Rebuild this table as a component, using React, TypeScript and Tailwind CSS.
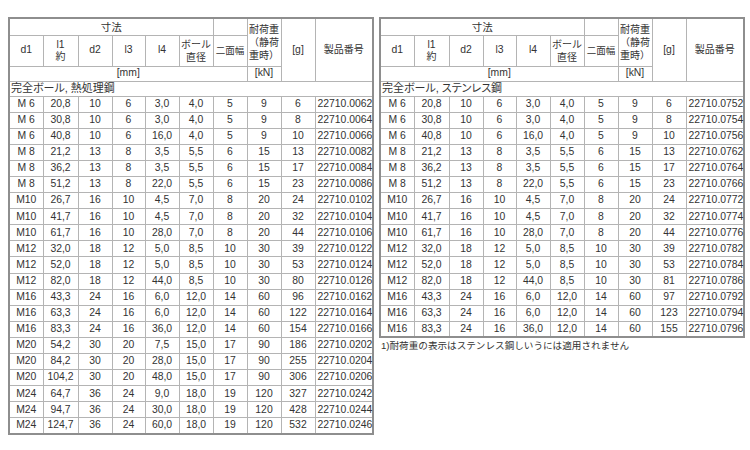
import React from "react";

type Row = [string, string, string, string, string, string, string, string, string, string];

const leftRows: Row[] = [
  ["M 6", "20,8", "10", "6", "3,0", "4,0", "5", "9", "6", "22710.0062"],
  ["M 6", "30,8", "10", "6", "3,0", "4,0", "5", "9", "8", "22710.0064"],
  ["M 6", "40,8", "10", "6", "16,0", "4,0", "5", "9", "10", "22710.0066"],
  ["M 8", "21,2", "13", "8", "3,5", "5,5", "6", "15", "13", "22710.0082"],
  ["M 8", "36,2", "13", "8", "3,5", "5,5", "6", "15", "17", "22710.0084"],
  ["M 8", "51,2", "13", "8", "22,0", "5,5", "6", "15", "23", "22710.0086"],
  ["M10", "26,7", "16", "10", "4,5", "7,0", "8", "20", "24", "22710.0102"],
  ["M10", "41,7", "16", "10", "4,5", "7,0", "8", "20", "32", "22710.0104"],
  ["M10", "61,7", "16", "10", "28,0", "7,0", "8", "20", "44", "22710.0106"],
  ["M12", "32,0", "18", "12", "5,0", "8,5", "10", "30", "39", "22710.0122"],
  ["M12", "52,0", "18", "12", "5,0", "8,5", "10", "30", "53", "22710.0124"],
  ["M12", "82,0", "18", "12", "44,0", "8,5", "10", "30", "80", "22710.0126"],
  ["M16", "43,3", "24", "16", "6,0", "12,0", "14", "60", "96", "22710.0162"],
  ["M16", "63,3", "24", "16", "6,0", "12,0", "14", "60", "122", "22710.0164"],
  ["M16", "83,3", "24", "16", "36,0", "12,0", "14", "60", "154", "22710.0166"],
  ["M20", "54,2", "30", "20", "7,5", "15,0", "17", "90", "186", "22710.0202"],
  ["M20", "84,2", "30", "20", "28,0", "15,0", "17", "90", "255", "22710.0204"],
  ["M20", "104,2", "30", "20", "48,0", "15,0", "17", "90", "306", "22710.0206"],
  ["M24", "64,7", "36", "24", "9,0", "18,0", "19", "120", "327", "22710.0242"],
  ["M24", "94,7", "36", "24", "30,0", "18,0", "19", "120", "428", "22710.0244"],
  ["M24", "124,7", "36", "24", "60,0", "18,0", "19", "120", "532", "22710.0246"],
];

const rightRows: Row[] = [
  ["M 6", "20,8", "10", "6", "3,0", "4,0", "5", "9", "6", "22710.0752"],
  ["M 6", "30,8", "10", "6", "3,0", "4,0", "5", "9", "8", "22710.0754"],
  ["M 6", "40,8", "10", "6", "16,0", "4,0", "5", "9", "10", "22710.0756"],
  ["M 8", "21,2", "13", "8", "3,5", "5,5", "6", "15", "13", "22710.0762"],
  ["M 8", "36,2", "13", "8", "3,5", "5,5", "6", "15", "17", "22710.0764"],
  ["M 8", "51,2", "13", "8", "22,0", "5,5", "6", "15", "23", "22710.0766"],
  ["M10", "26,7", "16", "10", "4,5", "7,0", "8", "20", "24", "22710.0772"],
  ["M10", "41,7", "16", "10", "4,5", "7,0", "8", "20", "32", "22710.0774"],
  ["M10", "61,7", "16", "10", "28,0", "7,0", "8", "20", "44", "22710.0776"],
  ["M12", "32,0", "18", "12", "5,0", "8,5", "10", "30", "39", "22710.0782"],
  ["M12", "52,0", "18", "12", "5,0", "8,5", "10", "30", "53", "22710.0784"],
  ["M12", "82,0", "18", "12", "44,0", "8,5", "10", "30", "81", "22710.0786"],
  ["M16", "43,3", "24", "16", "6,0", "12,0", "14", "60", "97", "22710.0792"],
  ["M16", "63,3", "24", "16", "6,0", "12,0", "14", "60", "123", "22710.0794"],
  ["M16", "83,3", "24", "16", "36,0", "12,0", "14", "60", "155", "22710.0796"],
];

const colWidths = ["w-[34px]", "w-[35px]", "w-[34px]", "w-[33px]", "w-[34px]", "w-[34px]", "w-[34px]", "w-[34px]", "w-[34px]", "w-[58px]"];

const cell = "border border-[#b4b4b4] p-0 font-normal text-center align-middle";

function SpecTable({ title, rows }: { title: string; rows: Row[] }) {
  return (
    <table className="w-[364px] table-fixed border-collapse border-2 border-[#8e8e8e] text-[10.4px] text-[#333]">
      <colgroup>
        {colWidths.map((w, i) => (
          <col key={i} className={w} />
        ))}
      </colgroup>
      <thead>
        <tr className="h-[17px]">
          <th colSpan={6} className={`${cell} text-[10.5px]`}>寸法</th>
          <th className={cell}></th>
          <th rowSpan={2} className={`${cell} text-[10px] leading-[13px]`}>
            耐荷重
            <br />
            （静荷
            <br />
            重時）
          </th>
          <th rowSpan={3} className={cell}>[g]</th>
          <th rowSpan={3} className={`${cell} text-[10px]`}>製品番号</th>
        </tr>
        <tr className="h-[31px]">
          <th className={cell}>d1</th>
          <th className={`${cell} leading-[12px]`}>
            l1
            <br />
            <span className="text-[10px]">約</span>
          </th>
          <th className={cell}>d2</th>
          <th className={cell}>l3</th>
          <th className={cell}>l4</th>
          <th className={`${cell} text-[10px] leading-[13px]`}>
            ボール
            <br />
            直径
          </th>
          <th className={`${cell} text-[9.5px]`}>二面幅</th>
        </tr>
        <tr className="h-[15px]">
          <th colSpan={7} className={cell}>[mm]</th>
          <th className={cell}>[kN]</th>
        </tr>
      </thead>
      <tbody>
        <tr className="h-[15px]">
          <td colSpan={10} className={`${cell} pl-px text-left text-[11px] [font-feature-settings:'palt']`}>
            {title}
          </td>
        </tr>
        {rows.map((r, i) => (
          <tr key={i} className="h-[16.1px]">
            {r.map((v, j) => (
              <td key={j} className={j === 9 ? `${cell} pl-[2px] text-left` : cell}>
                {v}
              </td>
            ))}
          </tr>
        ))}
      </tbody>
    </table>
  );
}

export default function App() {
  return (
    <div className="flex h-[450px] w-[750px] items-start gap-[5px] bg-white pl-[8px] pt-[17px] font-['Liberation_Sans','Noto_Sans_CJK_JP',sans-serif] leading-none">
      <SpecTable title="完全ボール, 熱処理鋼" rows={leftRows} />
      <div className="flex flex-col">
        <SpecTable title="完全ボール, ステンレス鋼" rows={rightRows} />
        <p className="mt-[3px] pl-[2px] text-[9.6px] text-[#333]">
          1)耐荷重の表示はステンレス鋼しいうには適用されません
        </p>
      </div>
    </div>
  );
}
